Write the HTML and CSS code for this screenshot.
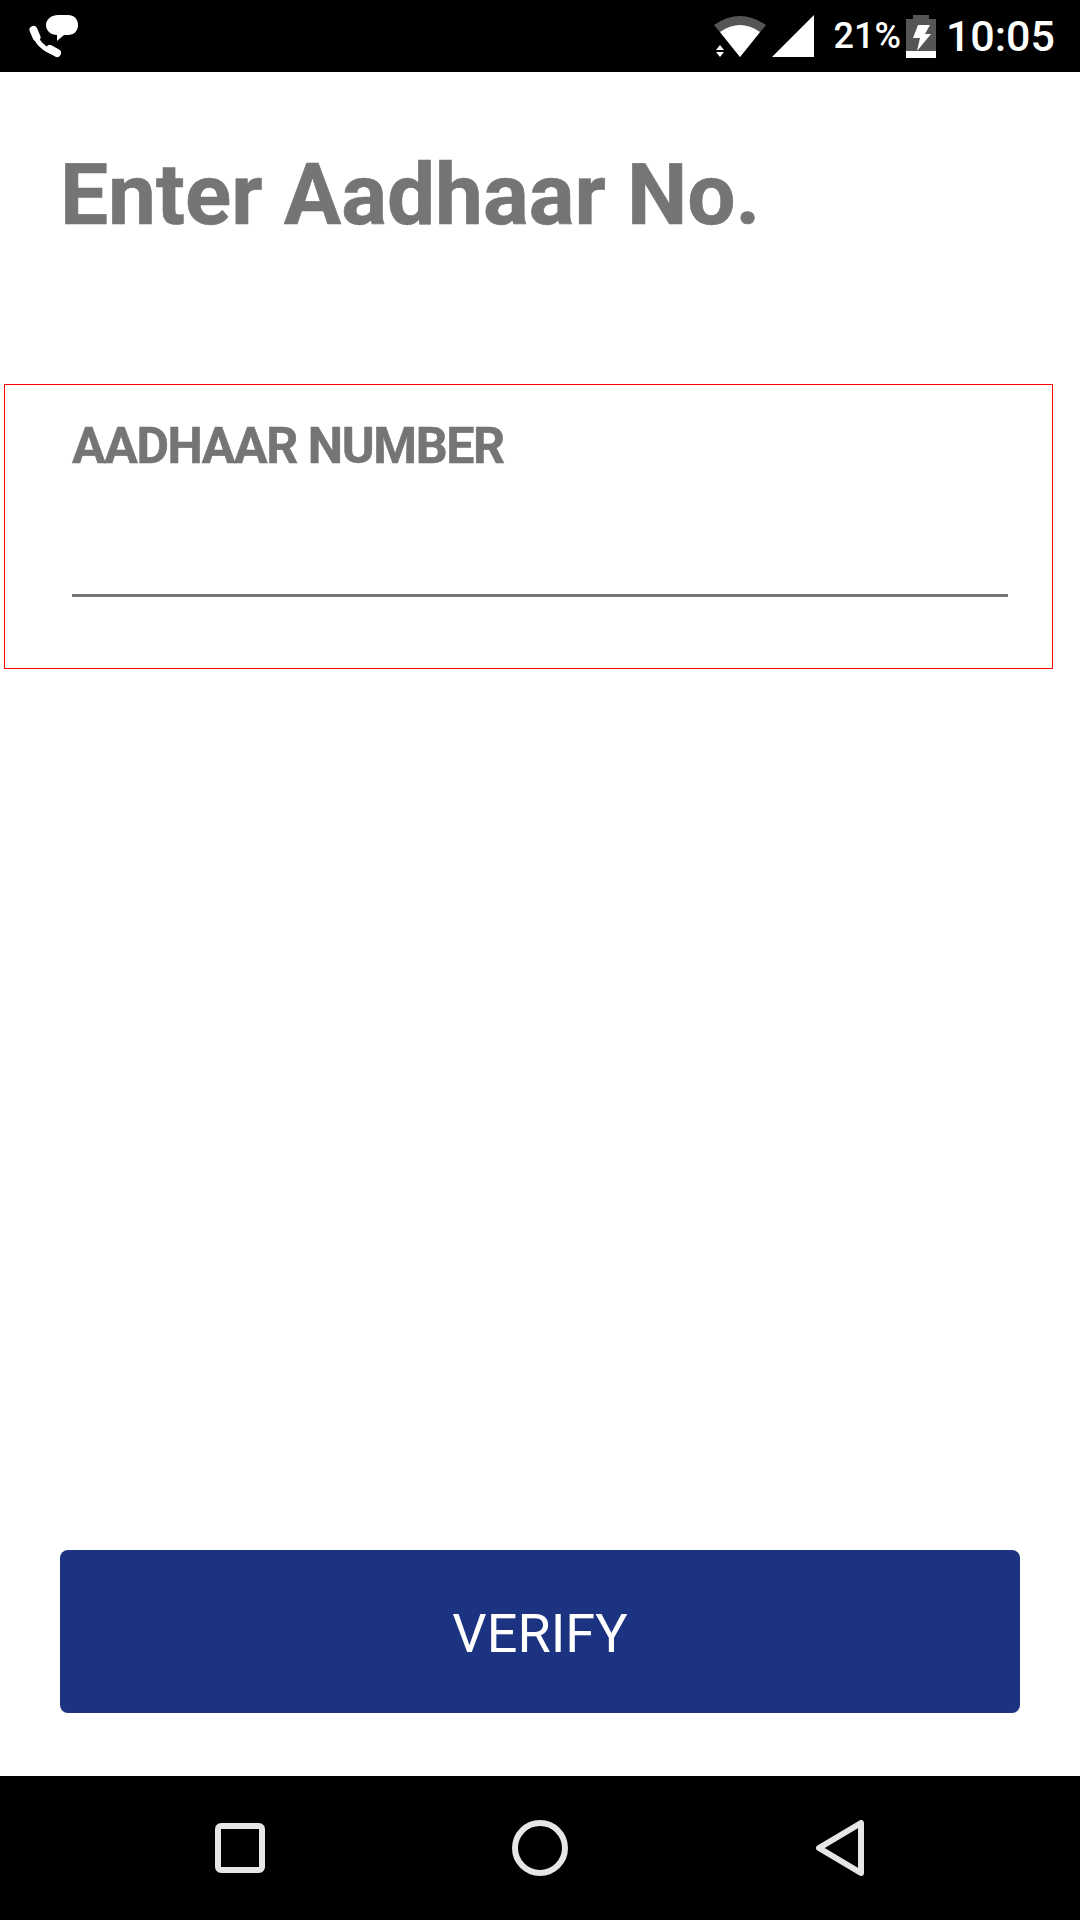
FILE: index.html
```html
<!DOCTYPE html>
<html>
<head>
    <meta charset="utf-8">
    <meta name="viewport" content="width=device-width, initial-scale=1.0">
    <title>Enter Aadhaar No.</title>
    <link rel="stylesheet" href="styles.css">
</head>
<body>
    <div class="status-bar">
        <svg class="notify-icon" viewBox="0 0 54 48">
            <path d="M30 3h10c6 0 10 4 10 10s-4 10-10 10h-4l-7 6 0-6c-6 0-11-4-11-10S24 3 30 3z" fill="#fff"/>
            <path d="M6 19C8 30 16 38 28 41" fill="none" stroke="#fff" stroke-width="5"/>
            <path d="M5.500 18l3 7M22 37l7 4" fill="none" stroke="#fff" stroke-width="8" stroke-linecap="round"/>
        </svg>
        <div class="status-right">
            <svg class="wifi-icon" viewBox="0 0 52 41">
                <path d="M0 9Q26-9 52 9L26 41z" fill="#555"/>
                <path d="M6 16Q26 2 46 16L26 41z" fill="#fff"/>
                <path d="M2 34l4-5 4 5zM2 36l4 5 4-5z" fill="#fff"/>
            </svg>
            <svg class="signal-icon" viewBox="0 0 42 42">
                <path d="M42 0V42H0z" fill="#fff"/>
            </svg>
            <span class="battery-text">21%</span>
            <svg class="battery-icon" viewBox="0 0 30 43">
                <path d="M7 0h16v4h7v32H0V4h7z" fill="#555"/>
                <path d="M0 36h30v7H0z" fill="#fff"/>
                <path d="M12 10h12l-5 9h6L11 36l3-13H7z" fill="#fff"/>
            </svg>
            <span class="clock">10:05</span>
        </div>
    </div>

    <div class="content">
        <h1 class="page-title">Enter Aadhaar No.</h1>

        <div class="field-box">
            <label class="field-label" for="aadhaar-number">AADHAAR NUMBER</label>
            <input class="field-input" id="aadhaar-number" type="text">
        </div>

        <button class="btn-verify">VERIFY</button>
    </div>

    <div class="nav-bar">
        <svg class="nav-square" viewBox="0 0 50 50">
            <rect x="3" y="3" width="44" height="44" rx="3" fill="none" stroke="#e6e6e6" stroke-width="6"/>
        </svg>
        <svg class="nav-circle" viewBox="0 0 56 56">
            <circle cx="28" cy="28" r="25" fill="none" stroke="#e6e6e6" stroke-width="6"/>
        </svg>
        <svg class="nav-back" viewBox="0 0 48 56">
            <path d="M45 3V53L3 28z" fill="none" stroke="#e6e6e6" stroke-width="6" stroke-linejoin="round"/>
        </svg>
    </div>
</body>
</html>
```

FILE: styles.css
```css
html, body {
    margin: 0;
    padding: 0;
}

body {
    width: 1080px;
    height: 1920px;
    display: flex;
    flex-direction: column;
    background: #fff;
    font-family: Roboto, "Liberation Sans", sans-serif;
}

.status-bar {
    height: 72px;
    flex-shrink: 0;
    display: flex;
    align-items: center;
    justify-content: space-between;
    padding: 0 25px 0 28px;
    background: #000;
    color: #fff;
}

.notify-icon {
    width: 54px;
    height: 48px;
}

.status-right {
    display: flex;
    align-items: center;
}

.wifi-icon {
    width: 52px;
    height: 41px;
    margin-right: 6px;
}

.signal-icon {
    width: 42px;
    height: 42px;
    margin-right: 19px;
}

.battery-text {
    font-size: 36px;
    font-weight: 500;
    margin-right: 5px;
}

.battery-icon {
    width: 30px;
    height: 43px;
    margin-right: 10px;
}

.clock {
    font-size: 43px;
    font-weight: 500;
}

.content {
    flex: 1;
    display: flex;
    flex-direction: column;
}

.page-title {
    margin: 73px 0 139px 60px;
    font-size: 85.5px;
    line-height: 100px;
    font-weight: 700;
    color: #757575;
    -webkit-text-stroke: 0.6px #757575;
}

.field-box {
    width: 1049px;
    height: 285px;
    margin-left: 4px;
    padding: 31px 44px 0 67px;
    box-sizing: border-box;
    border: 1px solid #f00;
}

.field-label {
    display: block;
    font-size: 50px;
    line-height: 60px;
    font-weight: 700;
    letter-spacing: -1.4px;
    color: #757575;
    -webkit-text-stroke: 0.5px #757575;
}

.field-input {
    display: block;
    width: 100%;
    height: 121px;
    padding: 0;
    box-sizing: border-box;
    border: none;
    border-bottom: 3px solid #757575;
    outline: none;
    background: transparent;
}

.btn-verify {
    width: 960px;
    height: 163px;
    margin: auto 0 63px 60px;
    padding: 4px 0 0;
    border: none;
    border-radius: 8px;
    background: #1b3380;
    color: #fff;
    font-family: inherit;
    font-size: 54px;
}

.nav-bar {
    height: 144px;
    flex-shrink: 0;
    display: flex;
    align-items: center;
    padding-left: 215px;
    background: #000;
}

.nav-square {
    width: 50px;
    height: 50px;
    margin-right: 247px;
}

.nav-circle {
    width: 56px;
    height: 56px;
    margin-right: 248px;
}

.nav-back {
    width: 48px;
    height: 56px;
}
```
